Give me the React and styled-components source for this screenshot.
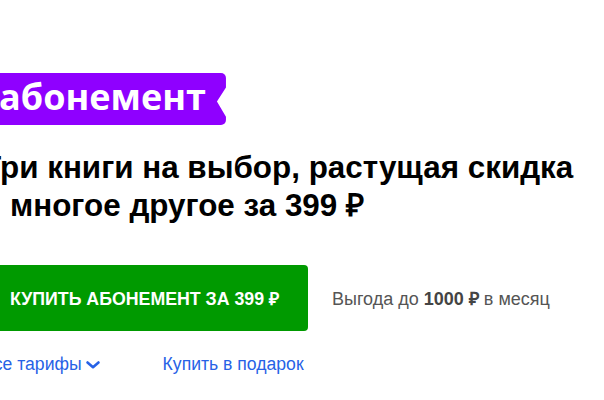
import React from 'react'
import styled, { createGlobalStyle } from 'styled-components'

const GlobalStyle = createGlobalStyle`
  html, body {
    margin: 0;
    background: #fff;
    overflow: hidden;
  }
  body {
    font-family: "Liberation Sans", Arial, sans-serif;
  }
`

const Page = styled.div`
  width: 604px;
  height: 400px;
  overflow: hidden;
`

const Content = styled.div`
  margin-left: -18px;
  padding-top: 73px;
  display: flex;
  flex-direction: column;
  align-items: flex-start;
`

const Ribbon = styled.div`
  display : flex;
  align-items : center;
  height : 52px;
  padding : 0 20px 4px 17px;
  background : #8f00ff;
  border-radius : 0 5px 5px 0;
  clip-path : polygon(0 0, 100% 0, 100% 28%, calc(100% - 9px) 55%, 100% 84%, 100% 100%, 0 100%);
  color : #fff;
  font-family : "Open Sans", sans-serif;
  font-weight : 700;
  font-size : 36px;
  line-height : 1;
  box-sizing : border-box;
`

const Title = styled.h1`
  margin : 24px 0 0;
  font-size : 31.4px;
  line-height : 38px;
  font-weight : 700;
  color : #000;
`

const Actions = styled.div`
  display : flex;
  align-items : center;
  gap : 24px;
  margin-top : 40px;
`

const BuyButton = styled.button`
  width : 326px;
  height : 66px;
  padding : 0 0 0 28px;
  border : none;
  border-radius : 4px;
  background : #009a00;
  color : #fff;
  font-family : inherit;
  font-size : 17.75px;
  font-weight : 700;
  text-transform : uppercase;
  text-align : left;
  cursor : pointer;
`

const Benefit = styled.span`
  font-size : 18px;
  color : #555;
  b { color : #444; }
`

const Links = styled.div`
  display : flex;
  align-items : center;
  gap : 62px;
  margin-top : 23px;
`

const LinkText = styled.a`
  display : flex;
  align-items : center;
  gap : 3px;
  font-size : 17.6px;
  color : #2762e6;
  text-decoration : none;
  cursor : pointer;
`

const Chevron = () => (
  <svg width="16" height="10" viewBox="0 0 16 10">
    <path d="M2.5 2.5 L8 7.2 L13.5 2.5" fill="none" stroke="#2762e6" strokeWidth="2.6" strokeLinecap="round" strokeLinejoin="round" />
  </svg>
)

const App = () => {
  return (
    <Page>
      <GlobalStyle />
      <Content>
        <Ribbon>абонемент</Ribbon>
        <Title>
          Три книги на выбор, растущая скидка
          <br />
          и многое другое за 399 ₽
        </Title>
        <Actions>
          <BuyButton>Купить абонемент за 399 ₽</BuyButton>
          <Benefit>Выгода до <b>1000 ₽</b> в месяц</Benefit>
        </Actions>
        <Links>
          <LinkText>Все тарифы <Chevron /></LinkText>
          <LinkText>Купить в подарок</LinkText>
        </Links>
      </Content>
    </Page>
  )
}

export default App
